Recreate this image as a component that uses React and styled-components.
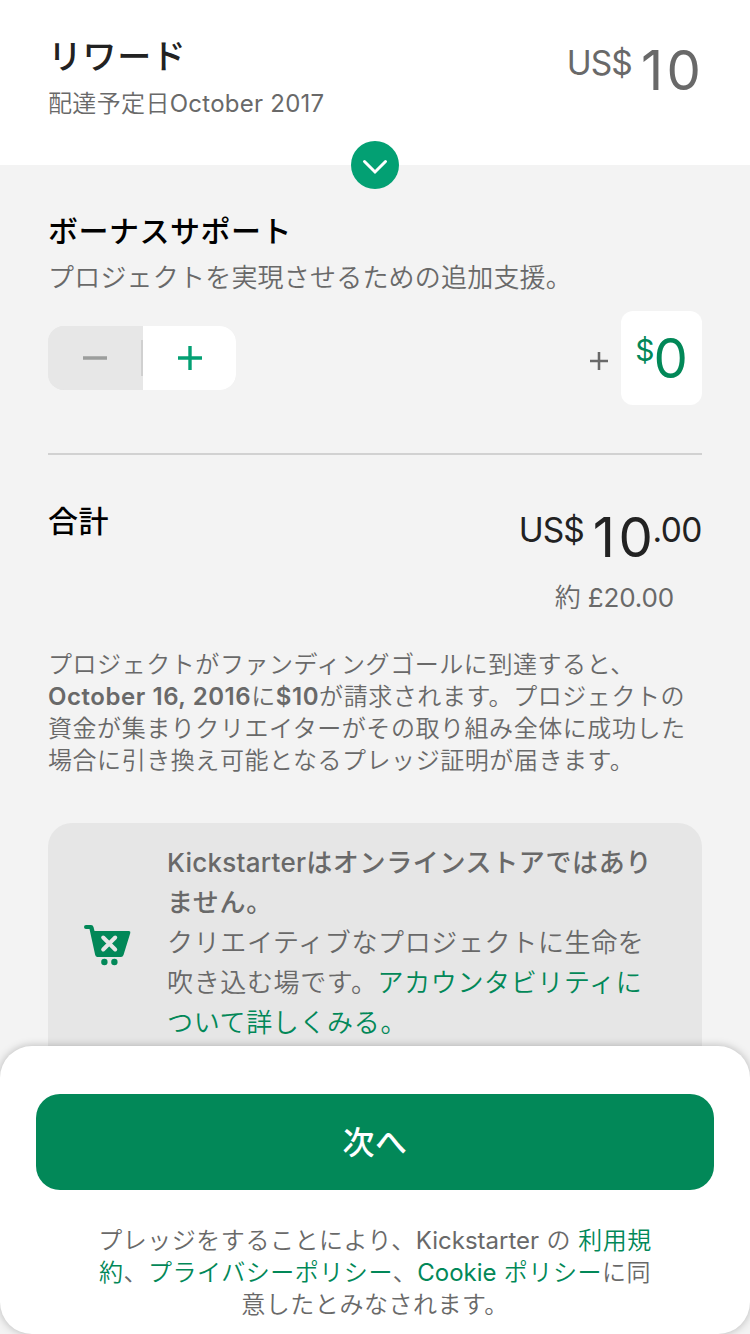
import React from 'react';
import styled, { createGlobalStyle } from 'styled-components';

const Global = createGlobalStyle`
  * { box-sizing: border-box; }
  body { margin: 0; background: #f3f3f3; overflow: hidden; font-family: Inter, "Noto Sans CJK JP", sans-serif; color: #696969; font-weight: 350; }
  h1, h2, p { margin: 0; }
  button { border: 0; padding: 0; font-family: inherit; }
`;
const Screen = styled.div`width: 750px; height: 1334px; overflow: hidden; position: relative; background: #f3f3f3;`;
const Header = styled.header`height: 165px; background: #fff; padding: 33px 49px 0 48px; display: flex; justify-content: space-between; position: relative;`;
const Title = styled.h1`font-size: 34px; line-height: 48px; font-weight: 500; color: #222; letter-spacing: .6px;`;
const Delivery = styled.p`font-size: 24px; line-height: 32px; margin-top: 7px; white-space: nowrap; letter-spacing: .35px;`;
const Price = styled.div`display: flex; align-items: flex-start; color: ${p => p.$color}; white-space: nowrap; font-weight: 400;`;
const Currency = styled.span`font-size: 33.5px; line-height: 42px; padding-top: 9px; letter-spacing: -.9px;`;
const Amount = styled.span`display: flex; gap: 3.5px; font-size: 54.5px; line-height: 60px; padding-top: 7px; margin-left: 9px;`;
const Cents = styled.span`font-size: 33.5px; line-height: 42px; padding-top: 9px; margin-left: -.5px; letter-spacing: -.5px;`;
const Expand = styled.button`position: absolute; left: 351px; top: 141px; width: 48px; height: 48px; border-radius: 50%; background: #03a073; display: grid; place-items: center;`;
const Content = styled.main`padding: 45px 48px 0;`;
const Heading = styled.h2`font-size: 30px; line-height: 42px; font-weight: 500; color: #000; letter-spacing: .5px;`;
const Subtitle = styled.p`font-size: 26px; line-height: 36px; margin-top: 8px; white-space: nowrap; letter-spacing: .2px;`;
const BonusRow = styled.div`display: flex; align-items: center; justify-content: space-between; height: 94px; margin-top: 15px;`;
const Stepper = styled.div`display: flex; align-items: center; width: 188px; height: 64px; border-radius: 16px; overflow: hidden; background: #e7e7e7;`;
const Step = styled.button`width: 93px; height: 64px; background: ${p => p.$active ? '#fff' : '#e7e7e7'}; display: grid; place-items: center;`;
const Divider = styled.span`width: 2px; height: 36px; background: #d0d0d0;`;
const Bonus = styled.div`display: flex; align-items: center; gap: 13px;`;
const PlusSlot = styled.span`display: flex; padding: 5px 0 0;`;
const BonusBox = styled.div`display: flex; width: 81px; height: 94px; border-radius: 12px; background: #fff; color: #028858; justify-content: center; font-weight: 400;`;
const BonusSign = styled.span`font-size: 30px; line-height: 40px; padding-top: 19px; margin-left: -1px;`;
const BonusNumber = styled.span`font-size: 54.5px; line-height: 60px; padding-top: 17px; letter-spacing: -1px; margin-left: -1px;`;
const Rule = styled.div`height: 2px; background: #d1d1d1; margin-top: 48px;`;
const Total = styled.section`display: flex; justify-content: space-between; height: 106px; padding-top: 45px;`;
const Approx = styled.p`font-size: 26px; line-height: 34px; text-align: right; padding-right: 28px; margin-top: 20px; letter-spacing: -.2px;`;
const Pledge = styled.div`margin-top: 34px; font-size: 24px; line-height: 32px; white-space: nowrap; letter-spacing: .56px;`;
const Line = styled.p``;
const Strong = styled.strong`font-weight: ${p => p.$weight || 600};`;
const Notice = styled.section`display: flex; height: 250px; margin-top: 46px; background: #e6e6e6; border-radius: 24px; padding-top: 20px;`;
const CartSlot = styled.div`width: 119px; padding: 82px 0 0 36px; flex-shrink: 0;`;
const NoticeText = styled.div`font-size: 26px; line-height: 40px; white-space: nowrap; letter-spacing: .64px;`;
const Link = styled.span`color: #028858;`;
const Latin = styled.span`font-weight: ${p => p.$weight || 400}; letter-spacing: ${p => p.$space || 0}px;`;
const Bottom = styled.footer`position: absolute; left: 0; top: 1046px; width: 750px; height: 288px; background: #fff; border-radius: 32px; padding: 48px 36px 0; box-shadow: 0 0 8px rgba(0,0,0,.25);`;
const Next = styled.button`display: block; width: 678px; height: 96px; background: #028858; color: #fff; border-radius: 24px; font-size: 32px; font-weight: 500; letter-spacing: .5px; padding-bottom: 4px;`;
const Legal = styled.div`font-size: 24px; line-height: 32px; margin-top: 35px; text-align: center; white-space: nowrap; letter-spacing: .54px;`;

const Plus = ({ size, width, color }) => <svg width={size} height={size} viewBox="0 0 24 24" fill="none" stroke={color} strokeWidth={width}><path d="M0 12H24M12 0V24"/></svg>;

export default function App() {
  return <><Global/><Screen>
    <Header>
      <div><Title>リワード</Title><Delivery>配達予定日<Latin $space={.25}>October 2017</Latin></Delivery></div>
      <Price $color="#696969"><Currency>US$</Currency><Amount><span>1</span><span>0</span></Amount></Price>
      <Expand aria-label="展開"><svg width="48" height="48" viewBox="0 0 48 48" fill="none" stroke="#fff" strokeWidth="3" strokeLinecap="round"><path d="M13.5 20.5L24 31L34.5 20.5"/></svg></Expand>
    </Header>
    <Content>
      <Heading>ボーナスサポート</Heading>
      <Subtitle>プロジェクトを実現させるための追加支援。</Subtitle>
      <BonusRow>
        <Stepper><Step aria-label="減らす"><svg width="24" height="4"><path d="M0 2H24" stroke="#9c9e9d" strokeWidth="3.5"/></svg></Step><Divider/><Step $active aria-label="増やす"><Plus size={24} width={3.4} color="#03a073"/></Step></Stepper>
        <Bonus><PlusSlot><Plus size={18} width={3.4} color="#696969"/></PlusSlot><BonusBox><BonusSign>$</BonusSign><BonusNumber>0</BonusNumber></BonusBox></Bonus>
      </BonusRow>
      <Rule/>
      <Total><Heading>合計</Heading><Price $color="#222"><Currency>US$</Currency><Amount><span>1</span><span>0</span></Amount><Cents>.00</Cents></Price></Total>
      <Approx>約 <Latin $space={-.15}>£20.00</Latin></Approx>
      <Pledge><Line>プロジェクトがファンディングゴールに到達すると、</Line><Line><Strong>October 16, 2016</Strong>に<Strong>$10</Strong>が請求されます。プロジェクトの</Line><Line>資金が集まりクリエイターがその取り組み全体に成功した</Line><Line>場合に引き換え可能となるプレッジ証明が届きます。</Line></Pledge>
      <Notice><CartSlot><svg width="48" height="42" viewBox="0 0 48 42"><path d="M2 0H7Q9 0 9.5 2L10.5 6H44.8Q46.8 6 46.3 8L39.5 30Q38.8 32 37 32H13.5Q11.7 32 11.2 30L5.5 4H2Q0 4 0 2Q0 0 2 0Z" fill="#028858"/><path d="M19.2 12.5l12 12M31.2 12.5L19.2 24.5" stroke="#e6e6e6" strokeWidth="4" strokeLinecap="round"/><circle cx="20.4" cy="37" r="3.2" fill="#028858"/><circle cx="30.4" cy="37" r="3.2" fill="#028858"/></svg></CartSlot><NoticeText><Line><Strong $weight={500}><Latin $weight={500} $space={.25}>Kickstarter</Latin>はオンラインストアではあり</Strong></Line><Line><Strong $weight={500}>ません。</Strong></Line><Line>クリエイティブなプロジェクトに生命を</Line><Line>吹き込む場です。<Link>アカウンタビリティに</Link></Line><Line><Link>ついて詳しくみる。</Link></Line></NoticeText></Notice>
    </Content>
    <Bottom><Next>次へ</Next><Legal><Line>プレッジをすることにより、<Latin>Kickstarter</Latin> の <Link>利用規</Link></Line><Line><Link>約</Link>、<Link>プライバシーポリシー</Link>、<Link><Latin>Cookie</Latin> ポリシー</Link>に同</Line><Line>意したとみなされます。</Line></Legal></Bottom>
  </Screen></>;
}
